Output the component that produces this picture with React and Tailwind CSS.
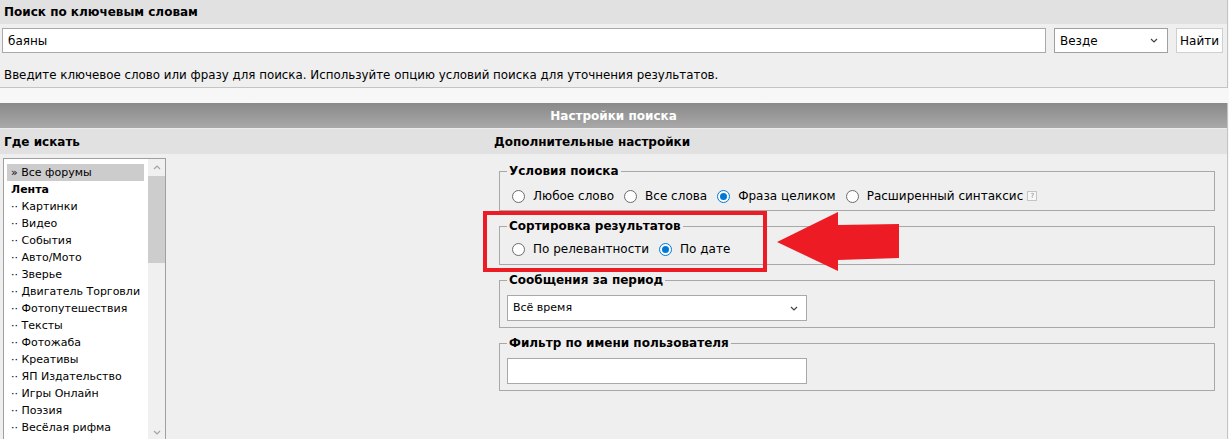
import React from "react";

const forums = [
  "Картинки",
  "Видео",
  "События",
  "Авто/Мото",
  "Зверье",
  "Двигатель Торговли",
  "Фотопутешествия",
  "Тексты",
  "Фотожаба",
  "Креативы",
  "ЯП Издательство",
  "Игры Онлайн",
  "Поэзия",
  "Весёлая рифма",
];

function Chevron({ up = false, className = "" }) {
  return (
    <svg width="8" height="5" viewBox="0 0 8 5" className={className}>
      <polyline
        points={up ? "1,4 4,1 7,4" : "1,1 4,4 7,1"}
        fill="none"
        stroke="currentColor"
        strokeWidth="1.2"
      />
    </svg>
  );
}

function Radio({ checked = false, label, children }) {
  return (
    <label className="flex items-center">
      <span
        className={`ml-[5px] flex h-[13px] w-[13px] items-center justify-center rounded-full border bg-white ${
          checked ? "border-[#0078d7]" : "border-[#6b6b6b]"
        }`}
      >
        {checked && <span className="h-[7px] w-[7px] rounded-full bg-[#0078d7]" />}
      </span>
      <span className="ml-[8px] mr-[5px] flex items-center">
        {label}
        {children}
      </span>
    </label>
  );
}

function Group({ title, children, bodyClass }) {
  return (
    <fieldset className="border border-[#a8a8a8] px-[7px]">
      <legend className="px-[2px] font-bold leading-[16px]">{title}</legend>
      <div className={bodyClass}>{children}</div>
    </fieldset>
  );
}

export default function App() {
  return (
    <div className="relative h-[439px] w-[1229px] overflow-hidden bg-[#f7f7f7] font-['DejaVu_Sans',Verdana,sans-serif] text-[12px] text-black">
      {/* keyword search */}
      <div className="w-[1228px] border-r border-b border-[#c4c4c4]">
        <div className="flex h-[24px] items-center bg-[#e1e1e1] pl-[4px] font-bold">
          Поиск по ключевым словам
        </div>
        <div className="h-[63px] bg-[#efefef] pt-[4px]">
          <div className="flex h-[25px]">
            <div className="ml-[2px] flex w-[1044px] items-center border border-[#a9a9a9] bg-white pl-[5px]">
              баяны
            </div>
            <div className="ml-[8px] flex w-[114px] items-center justify-between border border-[#a0a0a0] bg-white pl-[5px] pr-[9px]">
              <span>Везде</span>
              <Chevron className="text-[#444]" />
            </div>
            <button className="ml-[8px] flex w-[47px] items-center justify-center border border-[#cfcfcf] bg-[#fdfdfd]">
              Найти
            </button>
          </div>
          <div className="mt-[14px] pl-[4px] text-[11.85px] leading-[16px]">
            Введите ключевое слово или фразу для поиска. Используйте опцию условий поиска для уточнения результатов.
          </div>
        </div>
      </div>

      <div className="h-[15px]" />

      {/* search settings */}
      <div className="h-[400px] w-[1228px] border-r border-[#c4c4c4]">
        <div className="flex h-[25px] items-center justify-center bg-linear-to-b from-[#898989] to-[#a9a9a9] font-bold text-white">
          Настройки поиска
        </div>
        <div className="flex h-[26px] border-t border-[#ececec] bg-[#e1e1e1] font-bold">
          <div className="flex w-[490px] items-center pl-[4px]">Где искать</div>
          <div className="flex items-center pl-[4px]">Дополнительные настройки</div>
        </div>

        <div className="flex h-[300px] bg-[#efefef]">
          {/* forum list */}
          <div className="w-[490px] pt-[4px] pl-[3px]">
            <div className="flex h-[284px] w-[163px] border border-[#a0a0a0] bg-white">
              <div className="flex-1 pt-[5px] pl-[3px] pr-[4px] text-[11px] leading-[17px]">
                <div className="h-[17px] bg-[#cccccc] pl-[4px]">» Все форумы</div>
                <div className="h-[17px] pl-[4px] font-bold">Лента</div>
                {forums.map((f) => (
                  <div key={f} className="h-[17px] pl-[4px]">
                    ·· {f}
                  </div>
                ))}
              </div>
              <div className="flex w-[17px] flex-col bg-[#f0f0f0] text-[#a3a3a3]">
                <div className="flex h-[17px] items-center justify-center">
                  <Chevron up />
                </div>
                <div className="h-[87px] bg-[#cdcdcd]" />
                <div className="flex-1" />
                <div className="flex h-[17px] items-center justify-center">
                  <Chevron />
                </div>
              </div>
            </div>
          </div>

          {/* additional options */}
          <div className="ml-[9px] flex w-[716px] flex-col gap-[7px] pt-[9px]">
            <Group title="Условия поиска" bodyClass="mt-[8px] mb-[5px] flex h-[18px] items-center">
              <Radio label="Любое слово" />
              <Radio label="Все слова" />
              <Radio checked label="Фраза целиком" />
              <Radio label="Расширенный синтаксис">
                <span className="ml-[4px] flex h-[10px] w-[10px] items-center justify-center border border-[#c4c4c4] bg-[#f7f7f7] text-[7px] leading-none text-[#888]">
                  ?
                </span>
              </Radio>
            </Group>

            <Group title="Сортировка результатов" bodyClass="mt-[6px] mb-[6px] flex h-[18px] items-center">
              <Radio label="По релевантности" />
              <Radio checked label="По дате" />
            </Group>

            <Group title="Сообщения за период" bodyClass="mt-[7px] mb-[6px]">
              <div className="flex h-[26px] w-[300px] items-center justify-between border border-[#a9a9a9] bg-white pl-[5px] pr-[8px] text-[11px]">
                <span>Всё время</span>
                <Chevron className="text-[#444]" />
              </div>
            </Group>

            <Group title="Фильтр по имени пользователя" bodyClass="mt-[7px] mb-[6px]">
              <div className="h-[26px] w-[300px] border border-[#a9a9a9] bg-white" />
            </Group>
          </div>
        </div>
      </div>

      {/* highlight callout */}
      <div className="absolute left-[483px] top-[211px] h-[61px] w-[284px] border-4 border-[#ed1c24]" />
      <svg
        className="absolute left-[770px] top-[205px]"
        width="135"
        height="72"
        viewBox="0 0 135 72"
      >
        <polygon
          points="7,37 68,7 68,20 129,19 129,53 68,55 68,66"
          fill="#ed1c24"
        />
      </svg>
    </div>
  );
}
